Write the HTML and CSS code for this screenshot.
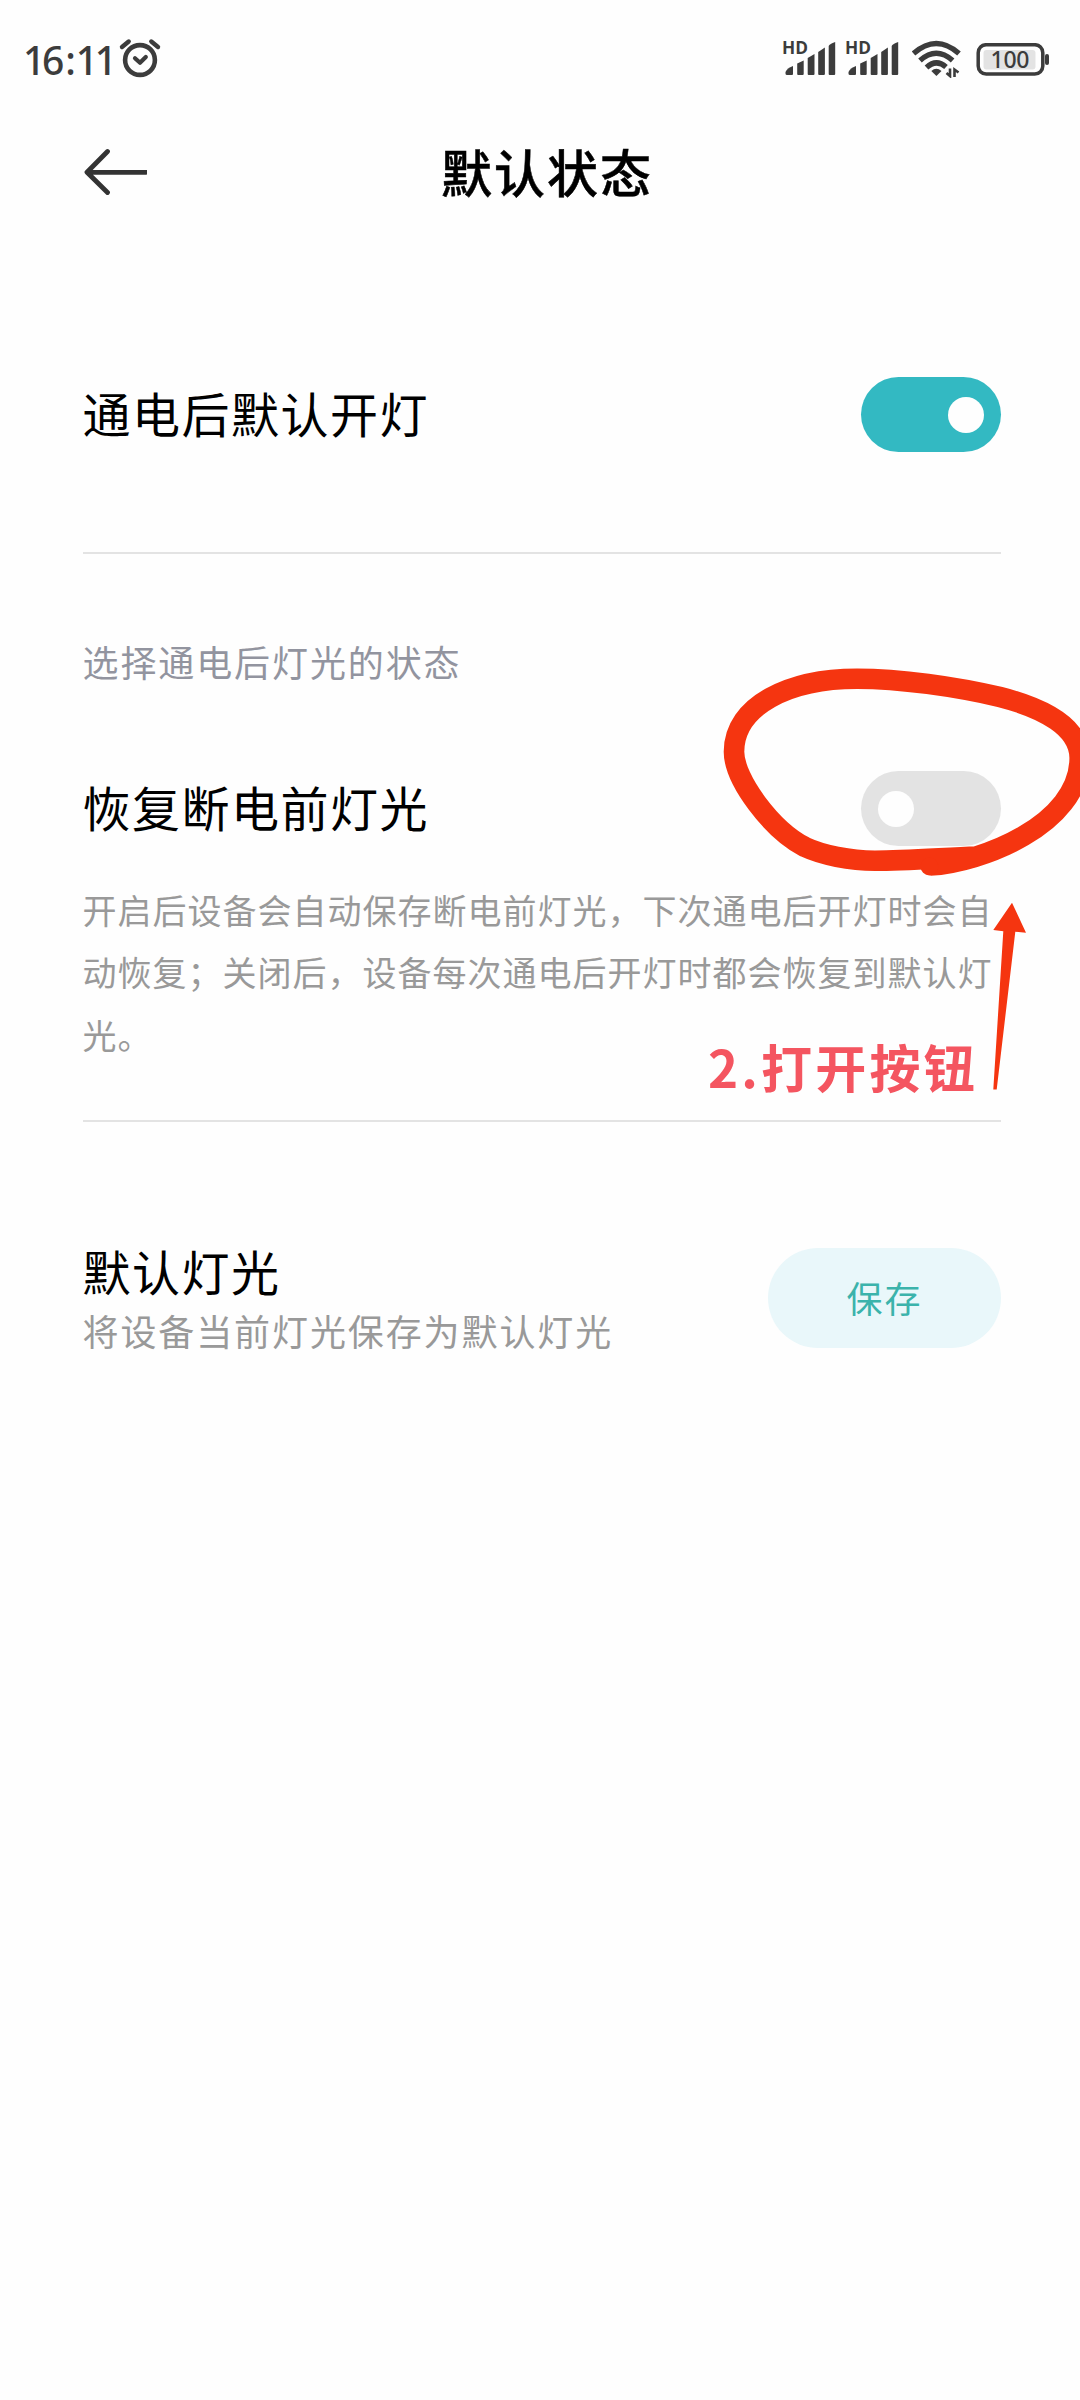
FILE: index.html
```html
<!DOCTYPE html>
<html lang="zh-CN">
<head>
<meta charset="utf-8">
<title>默认状态</title>
<link rel="stylesheet" href="styles.css">
</head>
<body>
<div class="screen">
  <div class="status-bar">
    <span class="clock">16<span class="colon">:</span>11</span>
    <svg class="alarm" width="44" height="40" viewBox="0 0 44 40" fill="none" stroke="#3c3c3c" stroke-linecap="round">
      <circle cx="22" cy="22" r="14.9" stroke-width="4.6"/>
      <path d="M4 9 L10.7 3.5 M33.3 3.5 L40 9" stroke-width="4.4"/>
      <path d="M17 20.2 L22 24.8 L27.8 19" stroke-width="4.2" stroke-linejoin="round"/>
    </svg>
    <div class="status-icons">
      <svg class="signal" width="54" height="36" viewBox="0 0 54 36" fill="#3c3c3c">
        <text class="hd" x="-1" y="14" textLength="26" lengthAdjust="spacingAndGlyphs">HD</text>
        <path d="M2.5 33.5 V32 Q4 28 10 26 V34 Q10 35 9 35 H4 Q2.5 35 2.5 33.5Z"/>
        <path d="M14.2 23.5 L20.7 20.5 V34 Q20.7 35 19.7 35 H15.2 Q14.2 35 14.2 34Z"/>
        <path d="M24.7 18 L31.5 14 V34 Q31.5 35 30.5 35 H25.7 Q24.7 35 24.7 34Z"/>
        <path d="M35.2 12 L41.9 7.5 V34 Q41.9 35 40.9 35 H36.2 Q35.2 35 35.2 34Z"/>
        <path d="M45.7 6 Q46.5 4 52.2 2 V34 Q52.2 35 51.2 35 H46.7 Q45.7 35 45.7 34Z"/>
      </svg>
      <svg class="signal signal-second" width="54" height="36" viewBox="0 0 54 36" fill="#3c3c3c">
        <text class="hd" x="-1" y="14" textLength="26" lengthAdjust="spacingAndGlyphs">HD</text>
        <path d="M2.5 33.5 V32 Q4 28 10 26 V34 Q10 35 9 35 H4 Q2.5 35 2.5 33.5Z"/>
        <path d="M14.2 23.5 L20.7 20.5 V34 Q20.7 35 19.7 35 H15.2 Q14.2 35 14.2 34Z"/>
        <path d="M24.7 18 L31.5 14 V34 Q31.5 35 30.5 35 H25.7 Q24.7 35 24.7 34Z"/>
        <path d="M35.2 12 L41.9 7.5 V34 Q41.9 35 40.9 35 H36.2 Q35.2 35 35.2 34Z"/>
        <path d="M45.7 6 Q46.5 4 52.2 2 V34 Q52.2 35 51.2 35 H46.7 Q45.7 35 45.7 34Z"/>
      </svg>
      <svg class="wifi" width="50" height="38" viewBox="0 0 50 38" fill="none" stroke="#3c3c3c">
        <path d="M1.5 13.5 Q24.3 -6.5 47 13.5" stroke-width="5.4"/>
        <path d="M8 20.5 Q24.3 6 40.6 20.5" stroke-width="5.4"/>
        <path d="M14.5 27.5 Q24.3 18.5 34 27" stroke-width="5.4"/>
        <path d="M19.3 31 Q24.3 26.5 29.5 31 L24.4 36Z" fill="#3c3c3c" stroke="none"/>
        <path d="M38 28.5 V36 L34.5 33 M42.5 37 V29.5 L46.5 32.5" stroke-width="2.6"/>
      </svg>
      <svg class="battery" width="74" height="34" viewBox="0 0 74 34">
        <rect x="2.2" y="1.7" width="64.6" height="29.3" rx="8" fill="none" stroke="#3c3c3c" stroke-width="3.5"/>
        <rect x="7.5" y="7" width="52" height="19.5" rx="3" fill="#e3e3e3"/>
        <rect x="69" y="11" width="4" height="11" rx="2" fill="#3c3c3c"/>
        <text class="level" x="14.5" y="25" textLength="39">100</text>
      </svg>
    </div>
  </div>

  <header class="nav">
    <svg class="back" width="67" height="54" viewBox="0 0 67 54" fill="none" stroke="#333" stroke-width="4.8" stroke-linecap="round" stroke-linejoin="round">
      <path d="M27.5 5.5 L7 26.3 L27.5 46.5 M8 26.3 H66"/>
    </svg>
    <h1 class="title">默认状态</h1>
  </header>

  <main class="settings">
    <section class="row row-power">
      <span class="name">通电后默认开灯</span>
      <span class="toggle toggle-on"><span class="knob"></span></span>
    </section>

    <section class="group">
      <p class="caption">选择通电后灯光的状态</p>
      <div class="row">
        <span class="name">恢复断电前灯光</span>
        <span class="toggle"><span class="knob"></span></span>
      </div>
      <p class="description">开启后设备会自动保存断电前灯光，下次通电后开灯时会自动恢复；关闭后，设备每次通电后开灯时都会恢复到默认灯光。</p>
    </section>

    <section class="row row-default">
      <div class="labels">
        <span class="name">默认灯光</span>
        <span class="hint">将设备当前灯光保存为默认灯光</span>
      </div>
      <button class="save" type="button">保存</button>
    </section>
  </main>

  <svg class="marks" width="1080" height="2400" viewBox="0 0 1080 2400">
    <path d="M930 865.5 C980 863 1079.7 825 1079.7 758 C1079.7 727 1043 708 1000 697 C955 686.5 900 678.7 857 678.7 C790 678.7 734 705 734 751.7 C734 780 772 830 805 847 C822 855 850 860.7 875 860.7 C905 860.7 940 858 977 856.5" fill="none" stroke="#f53510" stroke-width="20.6" stroke-linejoin="round"/>
    <circle cx="929.5" cy="866.5" r="9" fill="#f53510"/>
    <path d="M1012 902.7 L1026 932.7 L1015.3 931.7 L996.7 1089.5 H993.3 L1003.3 931.3 L993.3 930Z" fill="#f53510"/>
  </svg>
  <span class="note">2.打开按钮</span>
</div>
</body>
</html>
```
FILE: styles.css
```css
* { box-sizing: border-box; margin: 0; padding: 0; }

body {
  background: #fefefe;
  color: #000;
  font-family: "Noto Sans CJK SC", sans-serif;
}

.screen {
  position: relative;
  width: 1080px;
  height: 2400px;
  overflow: hidden;
}

.status-bar {
  display: flex;
  align-items: flex-start;
  height: 116px;
  padding: 38px 30px 0 23px;
}

.clock {
  width: 95px;
  color: #3c3c3c;
  font: 500 39px/44px "Noto Sans", sans-serif;
  letter-spacing: -3.2px;
  white-space: nowrap;
}

.colon { margin: 0 3px 0 4px; }

.alarm { flex: none; }

.status-icons {
  display: flex;
  align-items: flex-start;
  margin-left: auto;
  padding-top: 2px;
}

.signal { overflow: visible; }
.signal-second { margin-left: 9px; }
.wifi { margin-left: 12px; }
.battery { margin: 3px 0 0 14px; }

.hd { font: 700 17px "Open Sans", sans-serif; }
.level { fill: #3c3c3c; font: 500 23px "Noto Sans", sans-serif; }

.nav {
  display: grid;
  grid-template-columns: 80px 1fr 80px;
  align-items: center;
  height: 114px;
  padding: 0 80px;
}

.title {
  padding: 0 0 4px 14px;
  font-size: 51px;
  font-weight: 500;
  line-height: 60px;
  letter-spacing: 2px;
  text-align: center;
  -webkit-text-stroke: 0.5px #000;
}

.settings { padding: 0 79px 0 82.5px; }

.row {
  display: flex;
  align-items: center;
  justify-content: space-between;
}

.row-power {
  padding: 147px 0 100px;
  border-bottom: 2px solid #e3e3e3;
}

.name {
  padding-bottom: 5px;
  font-size: 48px;
  line-height: 60px;
  letter-spacing: 1.5px;
}

.toggle {
  flex: none;
  width: 140px;
  height: 75px;
  padding: 20px 17px;
  border-radius: 38px;
  background: #e3e3e3;
}

.knob {
  display: block;
  width: 36px;
  height: 36px;
  border-radius: 50%;
  background: #fefefe;
}

.toggle-on { background: #33b9c2; }
.toggle-on .knob { margin-left: auto; }

.group {
  height: 568px;
  padding-top: 81px;
  border-bottom: 2px solid #e3e3e3;
}

.caption {
  height: 136px;
  color: #92949f;
  font-size: 36px;
  line-height: 52px;
  letter-spacing: 1.9px;
}

.description {
  margin-top: 33px;
  color: #999;
  font-size: 34px;
  line-height: 62.3px;
  letter-spacing: 1px;
}

.row-default {
  align-items: flex-start;
  padding-top: 117px;
}

.labels {
  display: flex;
  flex-direction: column;
  padding-top: 3px;
}

.labels .name {
  padding-bottom: 6px;
  line-height: 56px;
}

.hint {
  color: #999;
  font-size: 36px;
  line-height: 52px;
  letter-spacing: 1.9px;
}

.save {
  width: 233px;
  height: 100px;
  margin-top: 9px;
  padding-bottom: 3px;
  border: 0;
  border-radius: 50px;
  background: #e9f7fa;
  color: #3bb3ab;
  font: 36px/52px "Noto Sans CJK SC", sans-serif;
  letter-spacing: 1.9px;
}

.marks {
  position: absolute;
  top: 0;
  left: 0;
}

.note {
  position: absolute;
  top: 1035px;
  left: 708px;
  color: #f45560;
  font-size: 51px;
  font-weight: 700;
  line-height: 62px;
  letter-spacing: 3.2px;
  white-space: nowrap;
}
```
